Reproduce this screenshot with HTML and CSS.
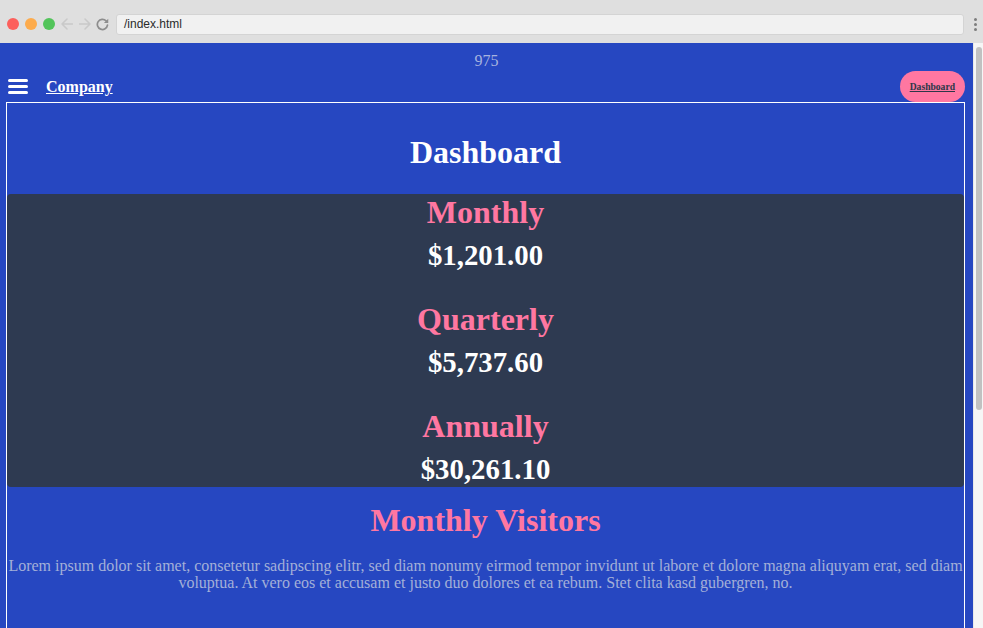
FILE: index.html
```html
<!DOCTYPE html>
<html>
<head>
<meta charset="utf-8">
<title>Dashboard</title>
<link rel="stylesheet" href="styles.css">
</head>
<body>
<div class="window">
  <div class="chrome">
    <div class="lights">
      <span class="light red"></span>
      <span class="light yellow"></span>
      <span class="light green"></span>
    </div>
    <svg class="nav-icon" width="12" height="12" viewBox="0 0 12 12"><path d="M11.5 6H1M6 1L1 6l5 5" fill="none" stroke="#c9c9c9" stroke-width="1.5" stroke-linecap="round" stroke-linejoin="round"/></svg>
    <svg class="nav-icon" width="12" height="12" viewBox="0 0 12 12"><path d="M0.5 6H11M6 1l5 5-5 5" fill="none" stroke="#c9c9c9" stroke-width="1.5" stroke-linecap="round" stroke-linejoin="round"/></svg>
    <svg class="nav-icon reload" width="13" height="13" viewBox="0 0 12 12"><path d="M10.6 6.6A4.7 4.7 0 1 1 9.3 2.6" fill="none" stroke="#8d8d8d" stroke-width="1.6" stroke-linecap="round"/><path d="M11.3 0.6V4.6H7.3Z" fill="#8d8d8d"/></svg>
    <div class="url">/index.html</div>
    <div class="kebab"><span></span><span></span><span></span></div>
  </div>
  <div class="viewport">
    <div class="page">
      <div class="width-label">975</div>
      <nav class="topnav">
        <div class="brand">
          <span class="burger"><span></span><span></span><span></span></span>
          <a class="company" href="#">Company</a>
        </div>
        <a class="pill" href="#">Dashboard</a>
      </nav>
      <main class="box">
        <h1 class="title">Dashboard</h1>
        <section class="panel">
          <div class="stat">
            <h2 class="stat-label">Monthly</h2>
            <p class="stat-value">$1,201.00</p>
          </div>
          <div class="stat">
            <h2 class="stat-label">Quarterly</h2>
            <p class="stat-value">$5,737.60</p>
          </div>
          <div class="stat">
            <h2 class="stat-label">Annually</h2>
            <p class="stat-value">$30,261.10</p>
          </div>
        </section>
        <h2 class="visitors">Monthly Visitors</h2>
        <p class="lorem">Lorem ipsum dolor sit amet, consetetur sadipscing elitr, sed diam nonumy eirmod tempor invidunt ut labore et dolore magna aliquyam erat, sed diam voluptua. At vero eos et accusam et justo duo dolores et ea rebum. Stet clita kasd gubergren, no.</p>
      </main>
    </div>
    <div class="scrollbar"><div class="thumb"></div></div>
  </div>
</div>
</body>
</html>
```

FILE: styles.css
```css
html, body {
  margin: 0;
  padding: 0;
  width: 983px;
  height: 628px;
  overflow: hidden;
}

.window {
  display: flex;
  flex-direction: column;
  width: 983px;
  height: 628px;
}

.chrome {
  height: 43px;
  flex: none;
  background: #dfdfdf;
  display: flex;
  align-items: center;
  padding-left: 7px;
  padding-top: 5px;
  box-sizing: border-box;
}

.lights {
  display: flex;
  gap: 6px;
}

.light {
  width: 12px;
  height: 12px;
  border-radius: 50%;
  display: block;
}

.red { background: #fc605c; }
.yellow { background: #fdab4c; }
.green { background: #52c45a; }

.nav-icon {
  display: block;
  margin-left: 6px;
}

.reload {
  margin-left: 5px;
}

.url {
  margin-left: 7px;
  width: 848px;
  height: 21px;
  box-sizing: border-box;
  background: #f1f1f1;
  border: 1px solid #d4d4d4;
  border-radius: 3px;
  font-family: "Liberation Sans", Arial, sans-serif;
  font-size: 12px;
  line-height: 19px;
  color: #2b2b2b;
  padding-left: 7px;
}

.kebab {
  margin-left: 10px;
  display: flex;
  flex-direction: column;
  gap: 2px;
}

.kebab span {
  width: 3px;
  height: 3px;
  border-radius: 50%;
  background: #7d7d7d;
  display: block;
}

.viewport {
  flex: 1;
  display: flex;
  min-height: 0;
}

.page {
  width: 973px;
  flex: none;
  background: #2647c1;
  overflow: hidden;
  padding-top: 9px;
  box-sizing: border-box;
  font-family: "Liberation Serif", "Times New Roman", serif;
}

.width-label {
  text-align: center;
  color: #a7b3df;
  font-size: 16px;
  line-height: 18px;
}

.topnav {
  margin-top: 1px;
  height: 31px;
  display: flex;
  align-items: center;
  justify-content: space-between;
  padding: 0 8px;
}

.brand {
  display: flex;
  align-items: center;
  gap: 18px;
}

.burger {
  display: flex;
  flex-direction: column;
  gap: 3px;
  width: 20px;
}

.burger span {
  display: block;
  height: 3px;
  border-radius: 2px;
  background: #ffffff;
}

.company {
  color: #ffffff;
  font-weight: bold;
  font-size: 16px;
  text-decoration: underline;
}

.pill {
  height: 31px;
  box-sizing: border-box;
  padding: 0 10px;
  border-radius: 16px;
  background: #ff77a1;
  color: #2d3748;
  font-weight: bold;
  font-size: 9.6px;
  line-height: 31px;
  text-decoration: underline;
}

.box {
  display: block;
  margin: 0 8px 0 6px;
  border: 1px solid #ffffff;
  text-align: center;
  padding-bottom: 200px;
}

.title {
  margin: 31px 0 23px;
  font-size: 32px;
  line-height: 37px;
  color: #ffffff;
}

.panel {
  background: #2e3a51;
  border-radius: 4px;
  padding-bottom: 1px;
  display: flex;
  flex-direction: column;
  gap: 29px;
}

.stat-label {
  margin: 0;
  font-size: 32px;
  line-height: 37px;
  color: #ff77a1;
}

.stat-value {
  margin: 7px 0 0;
  font-size: 28.8px;
  line-height: 34px;
  font-weight: bold;
  color: #ffffff;
}

.visitors {
  margin: 15px 0 18px;
  font-size: 32px;
  line-height: 37px;
  color: #ff77a1;
}

.lorem {
  margin: 0;
  font-size: 16px;
  line-height: 17px;
  color: #a3b0d8;
}

.scrollbar {
  width: 10px;
  flex: none;
  background: #f6f6f6;
  border-left: 1px solid #e8e8e8;
  box-sizing: border-box;
  padding: 4px 1px 0 2px;
}

.thumb {
  height: 363px;
  border-radius: 3px;
  background: #c1c1c1;
}
```
